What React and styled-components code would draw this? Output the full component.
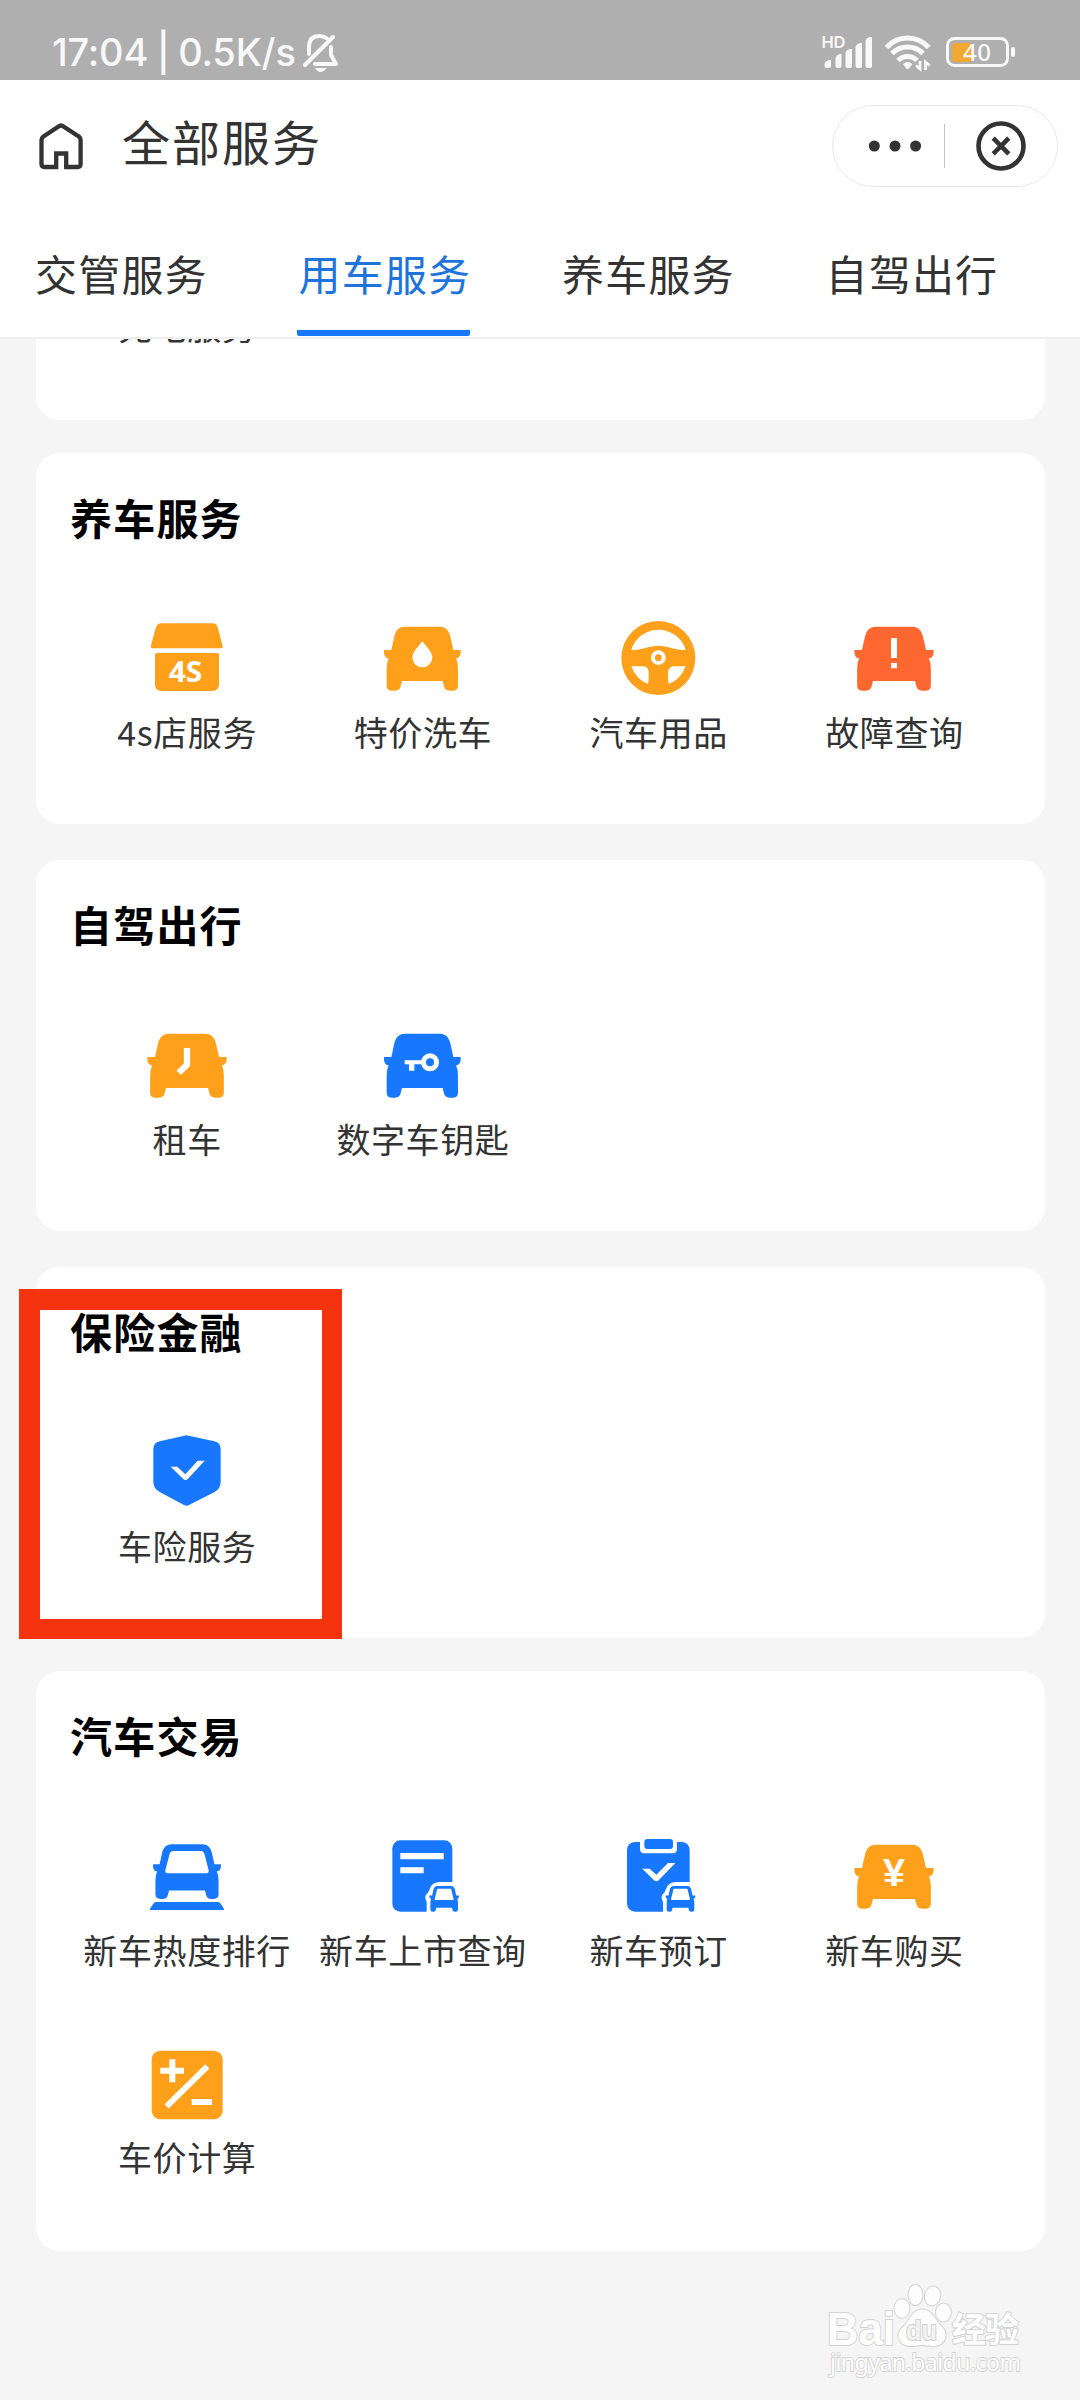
import React from 'react';
import styled, { createGlobalStyle } from 'styled-components';

const ORANGE = '#ffa01a';
const BLUE = '#1778ff';
const RED = '#ff6730';

const GlobalStyle = createGlobalStyle`
  body {
    margin: 0;
    background: #f5f5f5;
    font-family: 'Noto Sans CJK SC', 'Noto Sans', sans-serif;
    color: #333;
  }
`;

const Page = styled.div`
  position: relative;
  display: flex;
  flex-direction: column;
  width: 1080px;
  height: 2400px;
  overflow: hidden;
  background: #f5f5f5;
`;

const StatusBar = styled.div`
  display: flex;
  justify-content: space-between;
  align-items: flex-start;
  box-sizing: border-box;
  height: 80px;
  padding: 28px 62px 0 52px;
  background: #afafaf;
  color: #f8f8f8;
`;

const StatusGroup = styled.div`
  display: flex;
  align-items: flex-start;
`;

const StatusText = styled.span`
  width: 249px;
  font-family: Inter, sans-serif;
  font-size: 38px;
  font-weight: 500;
  line-height: 48px;
  letter-spacing: -0.2px;
  word-spacing: -1.4px;
  white-space: nowrap;
`;

const StatusIconRow = styled.svg`
  margin-top: 2px;
`;

const Header = styled.header`
  box-sizing: border-box;
  height: 259px;
  background: #fff;
  border-bottom: 2px solid #efefef;
`;

const TitleBar = styled.div`
  display: flex;
  align-items: center;
  box-sizing: border-box;
  height: 131px;
  padding: 0 22px 0 36px;
`;

const PageTitle = styled.h1`
  flex: 1;
  margin: 0 0 11px 36px;
  font-size: 48px;
  font-weight: 400;
  line-height: 70px;
  letter-spacing: 2px;
`;

const Capsule = styled.div`
  display: flex;
  align-items: center;
  justify-content: space-between;
  box-sizing: border-box;
  width: 226px;
  height: 82px;
  padding: 0 31px 0 35px;
  border: 1px solid #e8e8e8;
  border-radius: 41px;
`;

const CapsuleDivider = styled.span`
  width: 1px;
  height: 44px;
  margin: 0 4px 0 -5px;
  background: #c4c4c4;
`;

const Tabs = styled.nav`
  display: flex;
  gap: 90.5px;
  height: 125px;
  padding-left: 33px;
`;

const Tab = styled.div`
  box-sizing: border-box;
  width: 173px;
  height: 125px;
  padding: 32px 0 0 2px;
  border-bottom: 6px solid ${(props) => (props.$active ? '#1778ff' : 'transparent')};
  border-radius: 2px;
  color: ${(props) => (props.$active ? '#1f74dc' : '#333')};
  font-size: 42px;
  line-height: 60px;
  letter-spacing: 1.2px;
  text-align: center;
  white-space: nowrap;
`;

const Content = styled.main`
  display: flex;
  flex-direction: column;
  gap: 35px;
  flex: 1;
  min-height: 0;
  padding: 0 35px 0 36px;
  overflow: hidden;
`;

const Card = styled.section`
  flex: none;
  box-sizing: border-box;
  margin-top: ${(props) => props.$offset || 0}px;
  padding: 34px 33px 67px;
  border-radius: 24px;
  background: #fff;

  &:first-child {
    padding-bottom: 69px;
  }

  &:last-child {
    padding-bottom: 69px;
  }
`;

const CardTitle = styled.h2`
  margin: 0 0 67px 1px;
  color: #000;
  font-size: 42px;
  font-weight: 700;
  line-height: 60px;
  letter-spacing: 1.2px;
`;

const Grid = styled.div`
  display: grid;
  grid-template-columns: repeat(4, 235.75px);
  row-gap: 64px;
`;

const Service = styled.div`
  display: flex;
  flex-direction: column;
  align-items: center;
  gap: 3px;
`;

const ServiceIcon = styled.svg`
  display: block;
  width: 90px;
  height: 90px;
`;

const ServiceLabel = styled.span`
  padding-left: 0.6px;
  font-size: 34px;
  line-height: 50px;
  letter-spacing: 0.6px;
  white-space: nowrap;
`;

const Highlight = styled.div`
  position: absolute;
  top: 1289px;
  left: 19px;
  box-sizing: border-box;
  width: 323px;
  height: 350px;
  border: solid #f5330f;
  border-width: 21px 20px 20px 21px;
`;

const Watermark = styled.svg`
  position: absolute;
  left: 820px;
  top: 2280px;
  width: 210px;
  height: 100px;
`;

const CAR = 'M-52 -97H52C72 -97 80 -84 84 -68L93 -27H115V-20C115 -10 110 -2 101 -2Q107 10 107 30V80Q107 95 90 95H82Q68 95 65 82L61 66H-61L-65 82Q-68 95 -82 95H-90Q-107 95 -107 80V30Q-107 10 -101 -2C-110 -2 -115 -10 -115 -20V-27H-93L-84 -68C-80 -84 -72 -97 -52 -97Z';

const Car = ({ color, wide, children }) => (
  <>
    <path d={CAR} fill={color} transform={wide ? 'scale(1.033 1)' : undefined} />
    {children}
  </>
);

// little car in the lower right corner of a document icon
const CornerCar = () => (
  <>
    <path d="M13 110V74Q5 62 12 52Q18 48 21 38Q28 15 52 15H100V110Z" fill="#fff" />
    <g transform="translate(65.5 66) scale(.387 .401)">
      <path d={CAR} fill={BLUE} />
      <path d="M-50 -72H50L68 2H-68Z" fill="#fff" stroke="#fff" strokeWidth="10" strokeLinejoin="round" />
    </g>
  </>
);

const icons = {
  store: (
    <g fill={ORANGE}>
      <path d="M-76 -107H76Q89 -107 92 -95L107 -38Q108 -32 102 -32H-103Q-110 -32 -109 -38L-93 -95Q-89 -107 -76 -107Z" />
      <path d="M-90 -18H90Q96 -18 96 -12V76Q96 96 76 96H-76Q-96 96 -96 76V-12Q-96 -18 -90 -18Z" />
      <text x="-55" y="70" fill="#fff" fontFamily="Noto Sans, sans-serif" fontSize="84" fontWeight="700" textLength="101" lengthAdjust="spacingAndGlyphs">4S</text>
    </g>
  ),
  wash: (
    <g transform="translate(-2 0)">
      <Car color={ORANGE}>
        <path d="M0 -54C6 -44 30 -22 30 -5A30 30 0 0 1 -30 -5C-30 -22 -6 -44 0 -54Z" fill="#fff" />
      </Car>
    </g>
  ),
  wheel: (
    <g fill="#fff" transform="translate(1 0)">
      <circle cy="-3" r="111" fill={ORANGE} />
      <path d="M-81 -27A85 85 0 0 1 82 -27C50 -27 25 -40 0 -40S-50 -27 -81 -27Z" />
      <path d="M-81 22H-46Q-29 22 -29 42V62L-31 75Q-67 62 -81 22Z" />
      <path d="M82 22H47Q30 22 29 42V62L31 75Q68 62 82 22Z" />
      <circle cy="-4" r="16" fill="none" stroke="#fff" strokeWidth="12" />
    </g>
  ),
  fault: (
    <Car color={RED} wide>
      <path d="M-9 -63H9V-3H-9ZM-9 12H9V28H-9Z" fill="#fff" />
    </Car>
  ),
  rent: (
    <Car color={ORANGE} wide>
      <path d="M0 -54V-4L-25 20" fill="none" stroke="#fff" strokeWidth="19" />
    </Car>
  ),
  key: (
    <g transform="translate(-2 0)">
      <Car color={BLUE}>
        <circle cx="23" cy="-11" r="19.5" fill="none" stroke="#fff" strokeWidth="15" />
        <path d="M-53 -17H0V-5H-24V14H-40V-5H-53Z" fill="#fff" />
      </Car>
    </g>
  ),
  shield: (
    <>
      <path d="M-8 -112Q-2 -115 5 -112L82 -95Q101 -90 101 -72V26Q101 46 83 57L6 96Q-1 101 -9 96L-82 57Q-101 46 -101 26V-72Q-101 -90 -82 -95Z" fill={BLUE} />
      <path d="M-49 -19H-29L-5 4L32 -37H53L3 17Q-5 25 -12 17Z" fill="#fff" />
    </>
  ),
  rank: (
    <>
      <path d={CAR} fill={BLUE} transform="translate(0 -15.5) scale(.885 .854)" />
      <path d="M-42 -78H42Q50 -78 52 -70L65 -20Q66 -11 58 -11H-58Q-66 -11 -65 -20L-52 -70Q-50 -78 -42 -78Z" fill="#fff" />
      <path d="M-93 75H93Q98 75 101 80L111 95V99H-111V95L-101 80Q-98 75 -93 75Z" fill={BLUE} />
    </>
  ),
  list: (
    <g transform="translate(-2 0)">
      <rect x="-90" y="-110" width="180" height="214" rx="24" fill={BLUE} />
      <path d="M-66 -72H64V-53H-66ZM-66 -29H4V-11H-66Z" fill="#fff" />
      <CornerCar />
    </g>
  ),
  booking: (
    <g transform="translate(2 0)">
      <rect x="-95" y="-105" width="188" height="209" rx="24" fill={BLUE} />
      <path d="M-56 -110H55V-85Q55 -71 41 -71H-42Q-56 -71 -56 -85Z" fill="#fff" />
      <rect x="-43" y="-114" width="86" height="30" rx="9" fill={BLUE} />
      <path d="M-49 -25H-27L-7 -7L28 -42H50L0 10Q-7 16 -14 10Z" fill="#fff" />
      <CornerCar />
    </g>
  ),
  buy: (
    <Car color={ORANGE} wide>
      <text x="-33" y="27" fill="#fff" fontFamily="Liberation Sans, sans-serif" fontSize="116" fontWeight="700" textLength="66" lengthAdjust="spacingAndGlyphs">¥</text>
    </Car>
  ),
  calc: (
    <>
      <rect x="-106" y="-100" width="213" height="206" rx="26" fill={ORANGE} />
      <path d="M-80 -40H-9M-44 -74V-5M14 54H75M-61 67L61 -53" stroke="#fff" strokeWidth="18" />
    </>
  ),
};

const sections = [
  {
    title: '养车服务',
    offset: -2,
    items: [['store', '4s店服务'], ['wash', '特价洗车'], ['wheel', '汽车用品'], ['fault', '故障查询']],
  },
  {
    title: '自驾出行',
    offset: 1,
    items: [['rent', '租车'], ['key', '数字车钥匙']],
  },
  {
    title: '保险金融',
    offset: 1,
    items: [['shield', '车险服务']],
  },
  {
    title: '汽车交易',
    offset: -2,
    items: [
      ['rank', '新车热度排行'],
      ['list', '新车上市查询'],
      ['booking', '新车预订'],
      ['buy', '新车购买'],
      ['calc', '车价计算'],
    ],
  },
];

const tabs = ['交管服务', '用车服务', '养车服务', '自驾出行'];

const BellOff = () => (
  <svg width="40" height="44" viewBox="0 0 40 44" fill="none" stroke="#f8f8f8" strokeWidth="4" strokeLinecap="round" strokeLinejoin="round">
    <path d="M8 26V19C8 11 12 8 18.500 8C21.500 8 24 9 26 10.500" />
    <path d="M30 19V27L35 36H14" />
    <path d="M4 37L32 9" />
    <path d="M14 40H25.500Q23 44 19.700 44T14 40Z" fill="#f8f8f8" stroke="none" />
  </svg>
);

const StatusIcons = () => (
  <StatusIconRow width="198" height="44" viewBox="820 30 198 44" fill="#f8f8f8">
    <text x="821.500" y="48" fontFamily="Inter, sans-serif" fontSize="16.500" fontWeight="600" textLength="24">HD</text>
    <path d="M824.500 66V64Q825 61 829 60H831V66Q831 68 829 68H826.500Q824.500 68 824.500 66Z" />
    <path d="M835.500 66V58Q836 55 840 54H841.500V66Q841.500 68 839.500 68H837.500Q835.500 68 835.500 66Z" />
    <path d="M845.500 66V53Q846 50 850 49H852V66Q852 68 850 68H847.500Q845.500 68 845.500 66Z" />
    <path d="M855.500 66V47Q856 44 860 43H862V66Q862 68 860 68H857.500Q855.500 68 855.500 66Z" />
    <path d="M865.500 66V41Q866 38 870 37H872V66Q872 68 870 68H867.500Q865.500 68 865.500 66Z" />
    <g fill="none" stroke="#f8f8f8" strokeWidth="5.200">
      <path d="M886.500 47.500Q895 38 907.600 38T928.700 47.500" />
      <path d="M892 53.500Q898.500 47 907.600 47T923 53.500" />
      <path d="M898 60.500Q902 56.500 907.600 56.500T917 60.500" />
    </g>
    <path d="M903 64Q907.600 60 912.500 64L909 68.500Q907.600 70 906.200 68.500Z" />
    <path d="M920 61V69L916 65.500M925.500 70V62L929.500 65.500" fill="none" stroke="#f8f8f8" strokeWidth="2.800" />
    <rect x="947.500" y="38.500" width="60" height="27" rx="7" fill="none" stroke="#f8f8f8" strokeWidth="3" />
    <rect x="1011" y="47" width="4" height="10" rx="2" />
    <rect x="952" y="43" width="20" height="19" rx="3" fill="#f0a830" />
    <text x="963" y="61" fontFamily="Noto Sans, sans-serif" fontSize="24" fontWeight="500" textLength="28">40</text>
  </StatusIconRow>
);

const App = () => (
  <>
    <GlobalStyle />
    <Page>
      <StatusBar>
        <StatusGroup>
          <StatusText>17:04 | 0.5K/s</StatusText>
          <BellOff />
        </StatusGroup>
        <StatusIcons />
      </StatusBar>
      <Header>
        <TitleBar>
          <svg width="50" height="50" viewBox="36 122 50 50" fill="none" stroke="#333" strokeWidth="4.300">
            <path d="M56.200 170V154.500H66.200V170" />
            <path d="M58 168H44.500Q41.500 168 41.500 165V141Q41.500 139 43.500 137.500L58.500 127.500Q61 125.500 63.500 127.500L78.800 137.500Q80.600 139 80.600 141V165Q80.600 168 77.600 168H64.500" />
          </svg>
          <PageTitle>全部服务</PageTitle>
          <Capsule>
            <svg width="54" height="12" fill="#333">
              <circle cx="6.300" cy="6" r="5.500" />
              <circle cx="27" cy="6" r="5.500" />
              <circle cx="47.600" cy="6" r="5.500" />
            </svg>
            <CapsuleDivider />
            <svg width="50" height="50" viewBox="-25 -25 50 50" fill="none" stroke="#333" strokeWidth="4.600">
              <circle r="22.500" />
              <path d="M-7.800 -7.800L7.800 7.800M7.800 -7.800L-7.800 7.800" />
            </svg>
          </Capsule>
        </TitleBar>
        <Tabs>
          {tabs.map((name, i) => (
            <Tab key={name} $active={i === 1}>{name}</Tab>
          ))}
        </Tabs>
      </Header>
      <Content>
        {/* end of the previous section, scrolled under the header */}
        <Card $offset={-72}>
          <Grid>
            <Service>
              <ServiceLabel>充电服务</ServiceLabel>
            </Service>
          </Grid>
        </Card>
        {sections.map((section) => (
          <Card key={section.title} $offset={section.offset}>
            <CardTitle>{section.title}</CardTitle>
            <Grid>
              {section.items.map(([icon, label]) => (
                <Service key={label}>
                  <ServiceIcon viewBox="-135 -135 270 270">{icons[icon]}</ServiceIcon>
                  <ServiceLabel>{label}</ServiceLabel>
                </Service>
              ))}
            </Grid>
          </Card>
        ))}
      </Content>
      <Highlight />
      <Watermark viewBox="820 2280 210 100" fill="#fdfdfd" stroke="#d4d4d4" strokeWidth="2" paintOrder="stroke">
        <text x="827" y="2345" fontFamily="Liberation Sans, sans-serif" fontSize="46" fontWeight="700" textLength="68" lengthAdjust="spacingAndGlyphs">Bai</text>
        <ellipse cx="902" cy="2308.500" rx="7.500" ry="9.500" />
        <ellipse cx="915.500" cy="2295" rx="7" ry="10" />
        <ellipse cx="932.500" cy="2296" rx="7.500" ry="9.500" transform="rotate(12 932.500 2296)" />
        <ellipse cx="943.500" cy="2312.500" rx="7.500" ry="9" />
        <path d="M922 2309.500C933 2309.500 936 2322 942 2327C950 2335 944 2346 934 2346C928 2346 926 2345 922 2345S916 2346 911 2346C899 2346 894 2335 903 2327C909 2322 912 2309.500 922 2309.500Z" />
        <text x="906" y="2340" fontFamily="Liberation Sans, sans-serif" fontSize="27" fontWeight="700" textLength="31" lengthAdjust="spacingAndGlyphs" fill="#f2f2f2" stroke="#cfcfcf">du</text>
        <text x="952" y="2342" fontFamily="Noto Sans CJK SC, sans-serif" fontSize="34" fontWeight="700" textLength="67">经验</text>
        <text x="830" y="2370.500" fontFamily="Noto Sans, sans-serif" fontSize="23" strokeWidth="1.800" textLength="191">jingyan.baidu.com</text>
      </Watermark>
    </Page>
  </>
);

export default App;
